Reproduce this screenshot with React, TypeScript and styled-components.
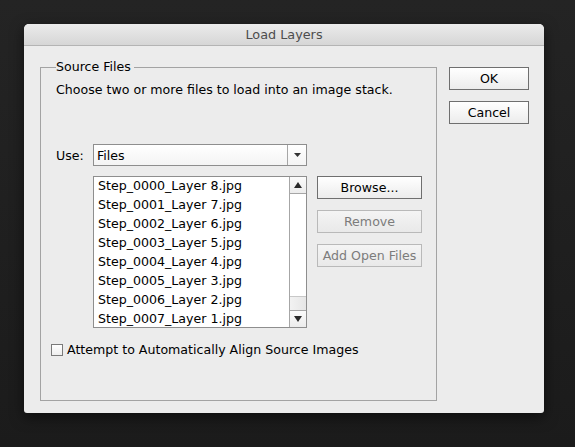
import React from 'react';
import styled, { createGlobalStyle } from 'styled-components';

const GlobalStyle = createGlobalStyle`
  html, body {
    margin: 0;
    padding: 0;
    height: 100%;
  }
  body {
    background: linear-gradient(180deg, #242424 0%, #1b1b1b 100%);
    font-family: 'DejaVu Sans', 'Liberation Sans', sans-serif;
    font-size: 12.6px;
    color: #000;
  }
`;

const Screen = styled.div`
  width: 575px;
  height: 447px;
  padding: 24px 31px 0 24px;
  box-sizing: border-box;
`;

const Dialog = styled.div`
  width: 520px;
  height: 389px;
  background: #ececec;
  border-radius: 5px 5px 3px 3px;
  box-shadow: 0 4px 14px rgba(0, 0, 0, 0.55);
  overflow: hidden;
  display: flex;
  flex-direction: column;
`;

const TitleBar = styled.div`
  height: 21px;
  flex: none;
  background: linear-gradient(180deg, #ebebeb 0%, #d6d6d6 100%);
  border-bottom: 1px solid #b4b4b4;
  display: flex;
  align-items: center;
  justify-content: center;
  color: #4d4d4d;
  font-size: 12.8px;
`;

const Body = styled.div`
  flex: 1;
  display: flex;
  padding: 14px 15px 0 16px;
  gap: 12px;
`;

const Group = styled.fieldset`
  margin: 0;
  width: 397px;
  height: 341px;
  box-sizing: border-box;
  border: 1px solid #a3a3a3;
  padding: 0 0 0 15px;
`;

const Legend = styled.legend`
  padding: 0 3px 0 0;
  margin-left: 0;
  line-height: 14px;
`;

const Description = styled.div`
  margin-top: 8px;
  line-height: 16px;
`;

const UseRow = styled.div`
  display: flex;
  align-items: center;
  margin-top: 46px;
  gap: 9px;
`;

const Label = styled.span`
  width: 28px;
`;

const Select = styled.div`
  width: 214px;
  height: 22px;
  box-sizing: border-box;
  border: 1px solid #8e8e8e;
  background: linear-gradient(180deg, #ffffff 0%, #f4f4f4 100%);
  display: flex;
  align-items: stretch;
`;

const SelectValue = styled.div`
  flex: 1;
  padding-left: 3px;
  display: flex;
  align-items: center;
`;

const SelectArrow = styled.div`
  width: 18px;
  border-left: 1px solid #a6a6a6;
  display: flex;
  align-items: center;
  justify-content: center;
`;

const ListRow = styled.div`
  display: flex;
  margin-top: 10px;
  margin-left: 37px;
  gap: 10px;
`;

const ListBox = styled.div`
  width: 214px;
  height: 152px;
  box-sizing: border-box;
  border: 1px solid #8e8e8e;
  background: #fff;
  display: flex;
  overflow: hidden;
`;

const Items = styled.div`
  flex: 1;
  margin-top: -1px;
  padding-left: 4px;
`;

const Item = styled.div`
  height: 19px;
  line-height: 19px;
  white-space: nowrap;
`;

const ScrollBar = styled.div`
  width: 16px;
  border-left: 1px solid #a6a6a6;
  display: flex;
  flex-direction: column;
`;

const ScrollButton = styled.div<{ bottom?: boolean }>`
  height: 16px;
  flex: none;
  display: flex;
  align-items: center;
  justify-content: center;
  background: linear-gradient(180deg, #fbfbfb 0%, #ececec 100%);
  ${p => (p.bottom ? 'border-top: 1px solid #a6a6a6;' : 'border-bottom: 1px solid #a6a6a6;')}
`;

const Track = styled.div`
  flex: 1;
  display: flex;
  flex-direction: column;
  justify-content: flex-end;
  background: #fff;
`;

const Thumb = styled.div`
  height: 13px;
  border-top: 1px solid #c8c8c8;
  background: linear-gradient(90deg, #f2f2f2 0%, #e6e6e6 100%);
`;

const SideButtons = styled.div`
  display: flex;
  flex-direction: column;
  gap: 11px;
`;

const Button = styled.div<{ disabled?: boolean; width?: number }>`
  width: ${p => p.width ?? 105}px;
  height: 23px;
  box-sizing: border-box;
  border: 1px solid ${p => (p.disabled ? '#b9b9b9' : '#6f6f6f')};
  background: ${p =>
    p.disabled
      ? 'linear-gradient(180deg, #f4f4f4 0%, #e9e9e9 100%)'
      : 'linear-gradient(180deg, #ffffff 0%, #ececec 100%)'};
  color: ${p => (p.disabled ? '#7c7c7c' : '#000')};
  display: flex;
  align-items: center;
  justify-content: center;
  white-space: nowrap;
`;

const CheckRow = styled.div`
  display: flex;
  align-items: center;
  gap: 4px;
  margin-top: 14px;
  margin-left: -5px;
`;

const CheckBox = styled.div`
  width: 12px;
  height: 12px;
  box-sizing: border-box;
  border: 1px solid #7a7a7a;
  background: linear-gradient(180deg, #ffffff 0%, #eeeeee 100%);
`;

const Actions = styled.div`
  display: flex;
  flex-direction: column;
  gap: 11px;
  padding-top: 7px;
`;

const Triangle = ({ up }: { up?: boolean }) => (
  <svg width="8" height="6" viewBox="0 0 8 6">
    <path d={up ? 'M4 0 L8 6 L0 6 Z' : 'M0 0 L8 0 L4 6 Z'} fill="#2a2a2a" />
  </svg>
);

const files = [
  'Step_0000_Layer 8.jpg',
  'Step_0001_Layer 7.jpg',
  'Step_0002_Layer 6.jpg',
  'Step_0003_Layer 5.jpg',
  'Step_0004_Layer 4.jpg',
  'Step_0005_Layer 3.jpg',
  'Step_0006_Layer 2.jpg',
  'Step_0007_Layer 1.jpg',
];

export default function App() {
  return (
    <>
      <GlobalStyle />
      <Screen>
        <Dialog>
          <TitleBar>Load Layers</TitleBar>
          <Body>
            <Group>
              <Legend>Source Files</Legend>
              <Description>Choose two or more files to load into an image stack.</Description>
              <UseRow>
                <Label>Use:</Label>
                <Select>
                  <SelectValue>Files</SelectValue>
                  <SelectArrow>
                    <svg width="7" height="4" viewBox="0 0 7 4">
                      <path d="M0 0 L7 0 L3.5 4 Z" fill="#333" />
                    </svg>
                  </SelectArrow>
                </Select>
              </UseRow>
              <ListRow>
                <ListBox>
                  <Items>
                    {files.map(f => (
                      <Item key={f}>{f}</Item>
                    ))}
                  </Items>
                  <ScrollBar>
                    <ScrollButton>
                      <Triangle up />
                    </ScrollButton>
                    <Track>
                      <Thumb />
                    </Track>
                    <ScrollButton bottom>
                      <Triangle />
                    </ScrollButton>
                  </ScrollBar>
                </ListBox>
                <SideButtons>
                  <Button>Browse...</Button>
                  <Button disabled>Remove</Button>
                  <Button disabled>Add Open Files</Button>
                </SideButtons>
              </ListRow>
              <CheckRow>
                <CheckBox />
                <span>Attempt to Automatically Align Source Images</span>
              </CheckRow>
            </Group>
            <Actions>
              <Button width={80}>OK</Button>
              <Button width={80}>Cancel</Button>
            </Actions>
          </Body>
        </Dialog>
      </Screen>
    </>
  );
}
